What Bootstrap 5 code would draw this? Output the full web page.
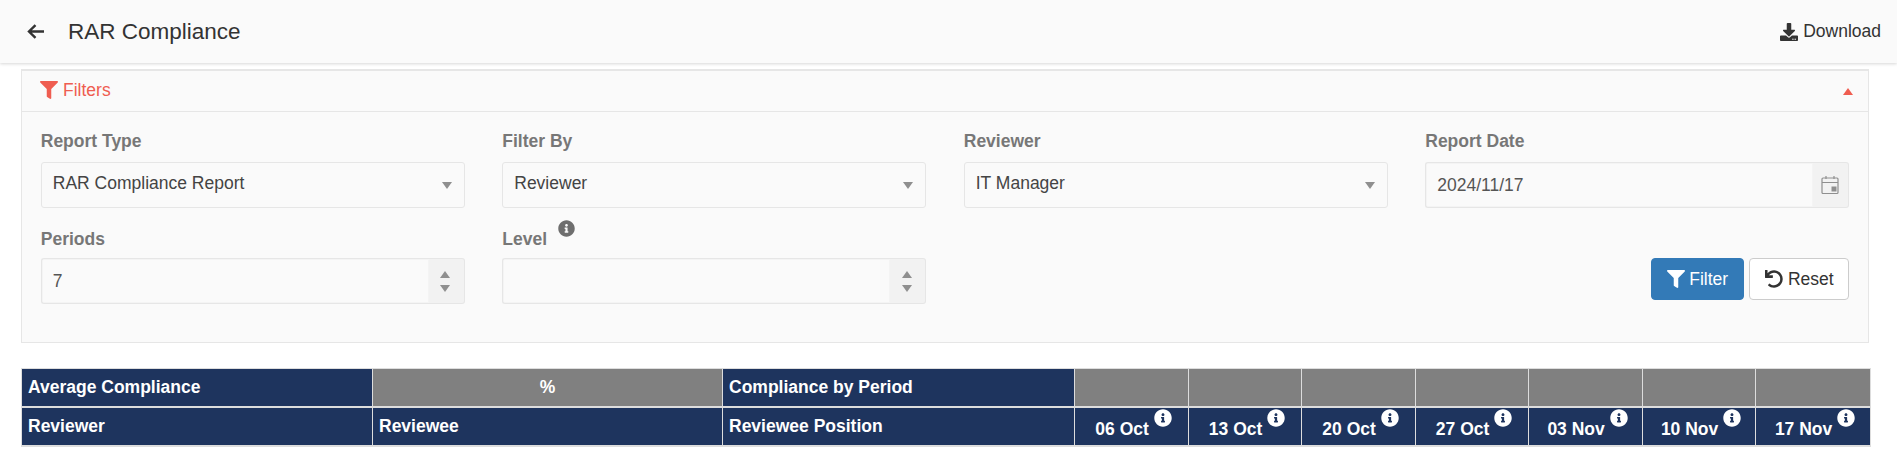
<!DOCTYPE html>
<html lang="en">
<head>
<meta charset="UTF-8">
<meta name="viewport" content="width=device-width, initial-scale=1.0">
<title>RAR Compliance</title>
<link href="https://cdn.jsdelivr.net/npm/bootstrap@5.3.3/dist/css/bootstrap.min.css" rel="stylesheet">
<script src="https://cdn.jsdelivr.net/npm/bootstrap@5.3.3/dist/js/bootstrap.bundle.min.js"></script>
<style>
body { font-family: "Liberation Sans", Arial, sans-serif; font-size: 17.5px; color: #333; background: #fff; overflow: hidden; }
.top-bar { height: 63px; background: #fafafa; box-shadow: 0 1px 3px rgba(0,0,0,.16); padding: 0 16px 0 27px; }
.top-title { font-size: 22.5px; font-weight: 400; margin: 0 0 0 24px; color: #333; }
.back-arrow { width: 17px; height: 15px; }
.dl-link { color: #333; text-decoration: none; font-size: 17.5px; }
.dl-link svg { width: 18px; height: 18px; margin-right: 5px; }
.filter-panel { margin: 6px 28px 0 21px; background: #fafafa; border: 1px solid #e6e6e6; height: 274px; border-top-width: 2px; }
.filter-head { height: 41px; padding: 0 15px 2px 18px; color: #ef5d50; border-bottom: 1px solid #e6e6e6; }
.filter-head svg { width: 18px; height: 18px; margin-right: 5px; }
.caret-up { width: 0; height: 0; margin-top: 2px; border-left: 5px solid transparent; border-right: 5px solid transparent; border-bottom: 7px solid #ef5d50; }
.filter-body { padding: 18px 18.75px 0; }
.filter-row { --bs-gutter-x: 37.5px; --bs-gutter-y: 0; }
.fld { margin-bottom: 20px; }
.fld-label { display: flex; font-weight: 700; color: #777; font-size: 17.5px; line-height: 23px; margin-bottom: 9px; height: 23px; }
.fld-low .fld-label { margin-bottom: 7px; }
.fld-info { width: 17px; height: 17px; margin: -8px 0 0 11px; fill: #6e6e6e; }
.fld-box.form-control, .fld-box.form-select { height: 46px; border-radius: 3px; background-color: #fafafa; border: 1px solid #e6e6e6; color: #555; font-size: 17.5px; padding: 6px 11px; box-shadow: inset 0 0 0 1px #f4f4f4; }
.fld-box.form-select { box-shadow: none; background-image: none; color: #444; padding-bottom: 8px; padding-top: 4px; }
.input-group .fld-box.form-control { border-right: 0; }
.sel-wrap { position: relative; }
.sel-caret { position: absolute; right: 13px; top: 20px; width: 0; height: 0; border-left: 5px solid transparent; border-right: 5px solid transparent; border-top: 7px solid #8f8f8f; pointer-events: none; }
.fld-addon.input-group-text { width: 37px; padding: 0 1px 0 0; justify-content: center; background: #f2f2f2; border: 1px solid #e6e6e6; border-left: 0; border-radius: 0 3px 3px 0; flex-direction: column; gap: 7px; }
.fld-addon svg { width: 18px; height: 20px; }
.spin-up, .spin-down { width: 0; height: 0; border-left: 5px solid transparent; border-right: 5px solid transparent; }
.spin-up { border-bottom: 7px solid #8f8f8f; }
.spin-down { border-top: 7px solid #8f8f8f; }
.act-col { padding-top: 30px; }
.act-btn { height: 42px; border-radius: 4px; font-size: 17.5px; padding: 0; display: inline-flex; align-items: center; justify-content: center; }
.act-btn svg { width: 18px; height: 18px; margin-right: 4px; }
.act-filter { width: 93px; background: #337ab7; border: 1px solid #337ab7; color: #fff; }
.act-filter svg { fill: #fff; }
.act-reset { width: 100px; background: #fff; border: 1px solid #ccc; color: #333; margin-left: 5px; }
.act-reset svg { fill: #333; width: 18px; height: 18px; margin-right: 5px; }
.report-wrap { margin: 25px 27px 0 21px; }
.report-tbl { width: 1849px; table-layout: fixed; border-collapse: collapse; margin: 0; font-size: 17.5px; font-weight: 700; color: #fff; }
.report-tbl th { border: 1px solid #ddd; padding: 0 6px; height: 39px; font-weight: 700; vertical-align: middle; }
.report-tbl thead { border-bottom: 2px solid #ddd; }
.report-tbl tr:first-child th { height: 38px; border-bottom-width: 2px; }
.cell-navy { background: #1e345e; }
.cell-grey { background: #808080; }
.pct-cell { padding-right: 6px; text-align: center; }
.date-cell { text-align: center; padding: 0 0 0 4px !important; white-space: nowrap; }
.date-info { width: 18px; height: 18px; fill: #fff; vertical-align: 8px; }
</style>
</head>
<body>
<div class="top-bar d-flex align-items-center justify-content-between">
  <div class="d-flex align-items-center">
    <svg class="back-arrow" viewBox="0 0 17 15" fill="none" stroke="#333" stroke-width="2.4"><path d="M17 7.5H2M8.5 1.2L2 7.5l6.5 6.3"/></svg>
    <h1 class="top-title">RAR Compliance</h1>
  </div>
  <a class="dl-link d-flex align-items-center" href="#">
    <svg viewBox="0 0 512 512" fill="#333"><path d="M216 0h80c13.3 0 24 10.7 24 24v168h87.7c17.8 0 26.7 21.5 14.1 34.1L269.7 378.3c-7.5 7.5-19.8 7.5-27.3 0L90.1 226.1c-12.6-12.6-3.7-34.1 14.1-34.1H192V24c0-13.3 10.7-24 24-24zm296 376v112c0 13.3-10.7 24-24 24H24c-13.3 0-24-10.7-24-24V376c0-13.3 10.7-24 24-24h146.7l49 49c20.1 20.1 52.5 20.1 72.6 0l49-49H488c13.3 0 24 10.7 24 24zm-124 88c0-11-9-20-20-20s-20 9-20 20 9 20 20 20 20-9 20-20zm64 0c0-11-9-20-20-20s-20 9-20 20 9 20 20 20 20-9 20-20z"/></svg>Download
  </a>
</div>

<div class="filter-panel">
  <div class="filter-head d-flex align-items-center justify-content-between">
    <div class="d-flex align-items-center">
      <svg viewBox="0 0 512 512" fill="#ef5d50"><path d="M487.976 0H24.028C2.71 0-8.047 25.866 7.058 40.971L192 225.941V432c0 7.831 3.821 15.17 10.237 19.662l80 55.98C298.02 518.69 320 507.493 320 487.98V225.941l184.947-184.97C520.021 25.896 509.338 0 487.976 0z"/></svg>Filters
    </div>
    <span class="caret-up"></span>
  </div>
  <div class="filter-body">
    <div class="row filter-row">
      <div class="col-3 fld">
        <label class="fld-label">Report Type</label>
        <div class="sel-wrap"><select class="form-select fld-box"><option>RAR Compliance Report</option></select><span class="sel-caret"></span></div>
      </div>
      <div class="col-3 fld">
        <label class="fld-label">Filter By</label>
        <div class="sel-wrap"><select class="form-select fld-box"><option>Reviewer</option></select><span class="sel-caret"></span></div>
      </div>
      <div class="col-3 fld">
        <label class="fld-label">Reviewer</label>
        <div class="sel-wrap"><select class="form-select fld-box"><option>IT Manager</option></select><span class="sel-caret"></span></div>
      </div>
      <div class="col-3 fld">
        <label class="fld-label">Report Date</label>
        <div class="input-group">
          <input class="form-control fld-box" type="text" value="2024/11/17">
          <span class="input-group-text fld-addon">
            <svg viewBox="0 0 18 20" fill="none" stroke="#8f8f8f" stroke-width="1.2"><rect x="1" y="3" width="16" height="15.5" rx="1"/><path d="M1 7.5h16M5 1v3M13 1v3"/><rect x="10.5" y="11.5" width="5" height="5" fill="#8f8f8f" stroke="none"/></svg>
          </span>
        </div>
      </div>
      <div class="col-3 fld fld-low">
        <label class="fld-label">Periods</label>
        <div class="input-group">
          <input class="form-control fld-box" type="text" value="7">
          <span class="input-group-text fld-addon"><span class="spin-up"></span><span class="spin-down"></span></span>
        </div>
      </div>
      <div class="col-3 fld fld-low">
        <label class="fld-label">Level<svg class="fld-info" viewBox="0 0 512 512"><path d="M256 8C119.043 8 8 119.083 8 256c0 136.997 111.043 248 248 248s248-111.003 248-248C504 119.083 392.957 8 256 8zm0 110c23.196 0 42 18.804 42 42s-18.804 42-42 42-42-18.804-42-42 18.804-42 42-42zm56 254c0 6.627-5.373 12-12 12h-88c-6.627 0-12-5.373-12-12v-24c0-6.627 5.373-12 12-12h12v-64h-12c-6.627 0-12-5.373-12-12v-24c0-6.627 5.373-12 12-12h64c6.627 0 12 5.373 12 12v100h12c6.627 0 12 5.373 12 12v24z"/></svg></label>
        <div class="input-group">
          <input class="form-control fld-box" type="text" value="">
          <span class="input-group-text fld-addon"><span class="spin-up"></span><span class="spin-down"></span></span>
        </div>
      </div>
      <div class="col-6 d-flex justify-content-end align-items-start act-col">
        <button type="button" class="btn act-btn act-filter"><svg viewBox="0 0 512 512"><path d="M487.976 0H24.028C2.71 0-8.047 25.866 7.058 40.971L192 225.941V432c0 7.831 3.821 15.17 10.237 19.662l80 55.98C298.02 518.69 320 507.493 320 487.98V225.941l184.947-184.97C520.021 25.896 509.338 0 487.976 0z"/></svg>Filter</button>
        <button type="button" class="btn act-btn act-reset"><svg viewBox="0 0 512 512"><path d="M212.333 224.333H12c-6.627 0-12-5.373-12-12V12C0 5.373 5.373 0 12 0h48c6.627 0 12 5.373 12 12v78.112C117.773 39.279 184.26 7.47 258.175 8.007c136.906.994 246.448 111.623 246.157 248.532C504.041 393.258 393.12 504 256.333 504c-64.089 0-122.496-24.313-166.51-64.215-5.099-4.622-5.334-12.554-.467-17.42l33.967-33.967c4.474-4.474 11.662-4.717 16.401-.525C170.76 415.336 211.58 432 256.333 432c97.268 0 176-78.716 176-176 0-97.267-78.716-176-176-176-58.496 0-110.28 28.476-142.274 72.333h98.274c6.627 0 12 5.373 12 12v48c0 6.627-5.373 12-12 12z"/></svg>Reset</button>
      </div>
    </div>
  </div>
</div>

<div class="report-wrap">
  <table class="report-tbl" id="reportTbl">
    <colgroup>
      <col style="width:351px"><col style="width:350px"><col style="width:352px">
      <col style="width:114px"><col style="width:113px"><col style="width:114px"><col style="width:113px"><col style="width:114px"><col style="width:113px"><col style="width:115px">
    </colgroup>
    <thead>
      <tr id="rowOne">
        <th class="cell-navy">Average Compliance</th>
        <th class="cell-grey pct-cell">%</th>
        <th class="cell-navy">Compliance by Period</th>
      </tr>
      <tr id="rowTwo">
        <th class="cell-navy">Reviewer</th>
        <th class="cell-navy">Reviewee</th>
        <th class="cell-navy">Reviewee Position</th>
      </tr>
    </thead>
  </table>
</div>

<script>
const dates = ["06 Oct","13 Oct","20 Oct","27 Oct","03 Nov","10 Nov","17 Nov"]
const infoPath = "M256 8C119.043 8 8 119.083 8 256c0 136.997 111.043 248 248 248s248-111.003 248-248C504 119.083 392.957 8 256 8zm0 110c23.196 0 42 18.804 42 42s-18.804 42-42 42-42-18.804-42-42 18.804-42 42-42zm56 254c0 6.627-5.373 12-12 12h-88c-6.627 0-12-5.373-12-12v-24c0-6.627 5.373-12 12-12h12v-64h-12c-6.627 0-12-5.373-12-12v-24c0-6.627 5.373-12 12-12h64c6.627 0 12 5.373 12 12v100h12c6.627 0 12 5.373 12 12v24z"
dates.forEach((d)=>{
    const top = document.createElement("th")
    top.className = "cell-grey"
    document.getElementById("rowOne").appendChild(top)
    const th = document.createElement("th")
    th.className = "cell-navy date-cell"
    th.innerHTML = `${d} <svg class="date-info" viewBox="0 0 512 512"><path d="${infoPath}"/></svg>`
    document.getElementById("rowTwo").appendChild(th)
})
</script>
</body>
</html>
